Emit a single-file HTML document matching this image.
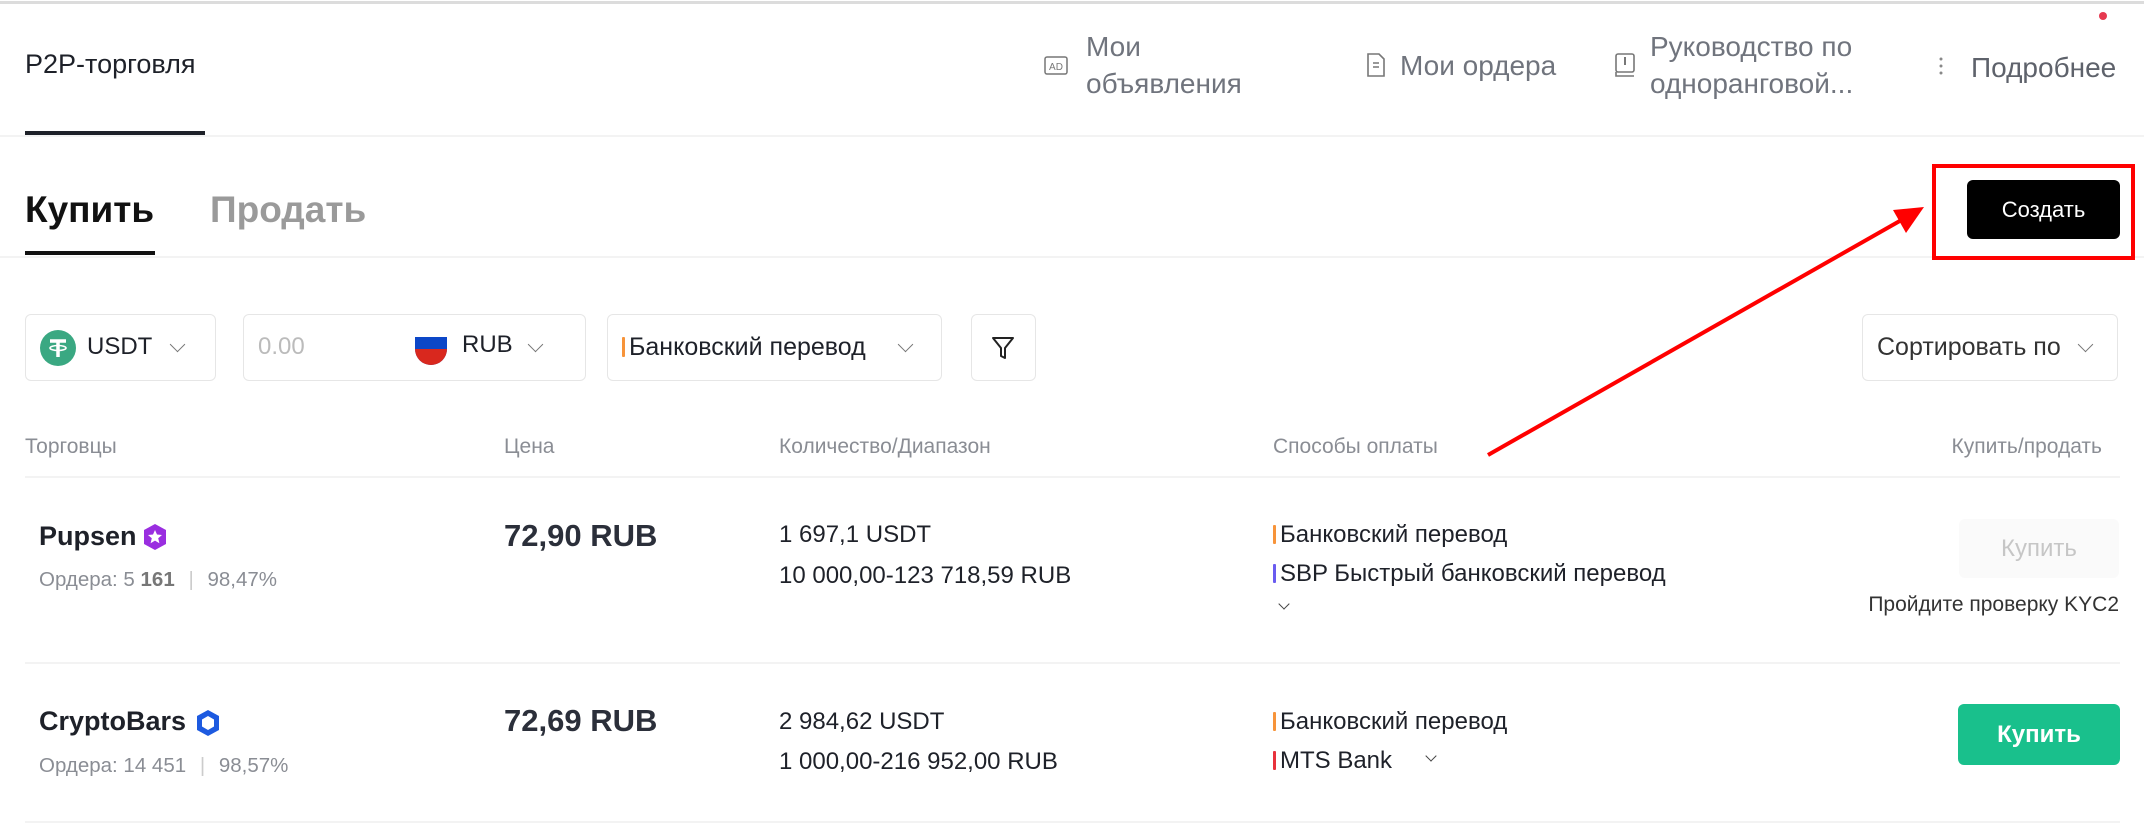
<!DOCTYPE html>
<html><head><meta charset="utf-8"><style>
*{margin:0;padding:0;box-sizing:border-box}
body{width:2144px;height:823px;background:#fff;position:relative;overflow:hidden;font-family:"Liberation Sans","DejaVu Sans",sans-serif;color:#1e2129}
.a{position:absolute;white-space:nowrap}
.hl{position:absolute;height:2px;background:#f3f3f3}
.box{position:absolute;border:1.5px solid #e6e6e6;border-radius:6px;top:314px;height:67px}
.chev{position:absolute;width:11px;height:11px;border-right:1.8px solid #777;border-bottom:1.8px solid #777;transform:rotate(45deg)}
.nav{color:#70747d;font-size:28px;line-height:37px}
.gray{color:#8a8d94}
.bar{display:inline-block;width:3px;height:19px;vertical-align:-2px;margin-right:4px;border-radius:1px}
</style></head><body>
<div class="a" style="left:0;top:1px;width:2144px;height:3px;background:#dcdcdc"></div>
<div class="a" style="left:2099px;top:12px;width:8px;height:8px;border-radius:50%;background:#e63950"></div>

<div class="a" style="left:25px;top:49px;font-size:27px;color:#1e2129">P2P-торговля</div>
<div class="a" style="left:25px;top:131px;width:180px;height:4px;background:#1e2129"></div>
<div class="hl" style="left:0;top:135px;width:2144px"></div>

<!-- nav -->
<svg class="a" style="left:1044px;top:56px" width="24" height="20" viewBox="0 0 24 20"><rect x="1" y="1" width="22" height="17" rx="2" fill="none" stroke="#777" stroke-width="1.5"/><text x="12" y="14" font-size="10" text-anchor="middle" fill="#777" font-family="Liberation Sans">AD</text></svg>
<div class="a nav" style="left:1086px;top:28px">Мои<br>объявления</div>
<svg class="a" style="left:1366px;top:52px" width="20" height="26" viewBox="0 0 20 26"><path d="M2 2h11l5 5v17H2z" fill="none" stroke="#777" stroke-width="1.6"/><path d="M7 11h6M7 15h6" stroke="#777" stroke-width="1.5"/></svg>
<div class="a nav" style="left:1400px;top:47px">Мои ордера</div>
<svg class="a" style="left:1614px;top:52px" width="22" height="26" viewBox="0 0 22 26"><rect x="2" y="2" width="18" height="18" rx="2" fill="none" stroke="#777" stroke-width="1.6"/><path d="M2 20v4h18" fill="none" stroke="#777" stroke-width="1.6"/><path d="M11 5v8" stroke="#777" stroke-width="2"/></svg>
<div class="a nav" style="left:1650px;top:28px">Руководство по<br>одноранговой...</div>
<svg class="a" style="left:1938px;top:56px" width="6" height="20" viewBox="0 0 6 20"><circle cx="3" cy="3" r="1.5" fill="#888"/><circle cx="3" cy="10" r="1.5" fill="#888"/><circle cx="3" cy="17" r="1.5" fill="#888"/></svg>
<div class="a nav" style="left:1971px;top:49px;color:#5e626b">Подробнее</div>

<!-- buy/sell tabs -->
<div class="a" style="left:25px;top:189px;font-size:37px;font-weight:bold;color:#111">Купить</div>
<div class="a" style="left:210px;top:189px;font-size:37px;font-weight:bold;color:#9a9a9a">Продать</div>
<div class="a" style="left:25px;top:251px;width:130px;height:4px;background:#111"></div>
<div class="hl" style="left:0;top:256px;width:2144px;height:1.5px"></div>

<!-- create -->
<div class="a" style="left:1932px;top:164px;width:203px;height:96px;border:4px solid #f00"></div>
<div class="a" style="left:1967px;top:180px;width:153px;height:59px;background:#000;border-radius:6px;color:#fff;font-size:22px;text-align:center;line-height:59px">Создать</div>
<svg class="a" style="left:0;top:0" width="2144" height="823"><line x1="1488" y1="455" x2="1905" y2="218" stroke="#f00" stroke-width="4"/><polygon points="1924,207 1893,210 1906,233" fill="#f00"/></svg>

<!-- filters -->
<div class="box" style="left:25px;width:191px"></div>
<svg class="a" style="left:40px;top:330px" width="36" height="36" viewBox="0 0 36 36"><circle cx="18" cy="18" r="18" fill="#3aa882"/><path d="M10 11h16M18 11v16" stroke="#fff" stroke-width="3.5"/><ellipse cx="18" cy="18" rx="8" ry="2.5" fill="none" stroke="#fff" stroke-width="1.6"/></svg>
<div class="a" style="left:87px;top:333px;font-size:24px">USDT</div>
<div class="chev" style="left:172px;top:339px"></div>

<div class="box" style="left:243px;width:343px"></div>
<div class="a" style="left:258px;top:333px;font-size:24px;color:#bbb">0.00</div>
<svg class="a" style="left:413px;top:331px" width="36" height="36" viewBox="0 0 36 36"><path d="M2 4h32v14a16 16 0 0 1-32 0z" fill="#0c47c8"/><path d="M2 4h32v2H2z" fill="#fff"/><path d="M2 18h32a16 16 0 0 1-32 0z" fill="#d9281e"/></svg>
<div class="a" style="left:462px;top:331px;font-size:24px">RUB</div>
<div class="chev" style="left:530px;top:339px"></div>

<div class="box" style="left:607px;width:335px"></div>
<div class="a" style="left:622px;top:333px;font-size:25px"><span class="bar" style="background:#f7943a;height:20px"></span>Банковский перевод</div>
<div class="chev" style="left:900px;top:339px"></div>

<div class="box" style="left:971px;width:65px"></div>
<svg class="a" style="left:991px;top:335px" width="24" height="26" viewBox="0 0 24 26"><path d="M2 3h20l-8 10v10l-4-2v-8z" fill="none" stroke="#222" stroke-width="2" stroke-linejoin="round"/></svg>

<div class="box" style="left:1862px;width:256px"></div>
<div class="a" style="left:1877px;top:333px;font-size:25px;color:#333">Сортировать по</div>
<div class="chev" style="left:2080px;top:339px"></div>

<!-- table header -->
<div class="a gray" style="left:25px;top:435px;font-size:21px">Торговцы</div>
<div class="a gray" style="left:504px;top:435px;font-size:21px">Цена</div>
<div class="a gray" style="left:779px;top:435px;font-size:21px">Количество/Диапазон</div>
<div class="a gray" style="left:1273px;top:435px;font-size:21px">Способы оплаты</div>
<div class="a gray" style="right:42px;top:435px;font-size:21px">Купить/продать</div>
<div class="hl" style="left:25px;top:476px;width:2095px"></div>

<!-- row1 -->
<div class="a" style="left:39px;top:521px;font-size:27px;font-weight:bold">Pupsen</div>
<svg class="a" style="left:142px;top:523px" width="26" height="28" viewBox="0 0 26 28"><path d="M13 1l11 6v14l-11 6-11-6V7z" fill="#9a2ee0"/><path d="M13 7l2 4.5 5 .5-3.8 3.3 1.2 5-4.4-2.7-4.4 2.7 1.2-5L6 12l5-.5z" fill="#fff"/></svg>
<div class="a gray" style="left:39px;top:568px;font-size:20.5px">Ордера: 5 <b style="color:#777">161</b> <span style="color:#ccc;margin:0 8px">|</span> 98,47%</div>
<div class="a" style="left:504px;top:518px;font-size:31px;font-weight:bold;color:#2b2f3a">72,90 RUB</div>
<div class="a" style="left:779px;top:521px;font-size:24px">1 697,1 USDT</div>
<div class="a" style="left:779px;top:562px;font-size:24px">10 000,00-123 718,59 RUB</div>
<div class="a" style="left:1273px;top:521px;font-size:24px"><span class="bar" style="background:#f7943a"></span>Банковский перевод</div>
<div class="a" style="left:1273px;top:560px;font-size:24px"><span class="bar" style="background:#6a5cf0"></span>SBP Быстрый банковский перевод</div>
<div class="chev" style="left:1280px;top:600px;width:8px;height:8px;border-color:#444"></div>
<div class="a" style="left:1959px;top:519px;width:160px;height:59px;background:#fafafa;border-radius:6px;color:#c6c6c6;font-size:24px;text-align:center;line-height:59px">Купить</div>
<div class="a" style="right:25px;top:593px;font-size:21px;color:#333">Пройдите проверку KYC2</div>
<div class="hl" style="left:25px;top:662px;width:2095px"></div>

<!-- row2 -->
<div class="a" style="left:39px;top:706px;font-size:27px;font-weight:bold">CryptoBars</div>
<svg class="a" style="left:195px;top:709px" width="26" height="28" viewBox="0 0 26 28"><path d="M13 1l11 6v14l-11 6-11-6V7z" fill="#1d5ae0"/><path d="M13 7l6 3.5v7L13 21l-6-3.5v-7z" fill="#fff"/></svg>
<div class="a gray" style="left:39px;top:754px;font-size:20.5px">Ордера: 14 451 <span style="color:#ccc;margin:0 8px">|</span> 98,57%</div>
<div class="a" style="left:504px;top:703px;font-size:31px;font-weight:bold;color:#2b2f3a">72,69 RUB</div>
<div class="a" style="left:779px;top:708px;font-size:24px">2 984,62 USDT</div>
<div class="a" style="left:779px;top:748px;font-size:24px">1 000,00-216 952,00 RUB</div>
<div class="a" style="left:1273px;top:708px;font-size:24px"><span class="bar" style="background:#f7943a"></span>Банковский перевод</div>
<div class="a" style="left:1273px;top:747px;font-size:24px"><span class="bar" style="background:#e8323c"></span>MTS Bank</div>
<div class="chev" style="left:1427px;top:752px;width:8px;height:8px;border-color:#444"></div>
<div class="a" style="left:1958px;top:704px;width:162px;height:61px;background:#19c08c;border-radius:6px;color:#fff;font-size:24px;font-weight:bold;text-align:center;line-height:61px">Купить</div>
<div class="hl" style="left:25px;top:821px;width:2095px"></div>
</body></html>
